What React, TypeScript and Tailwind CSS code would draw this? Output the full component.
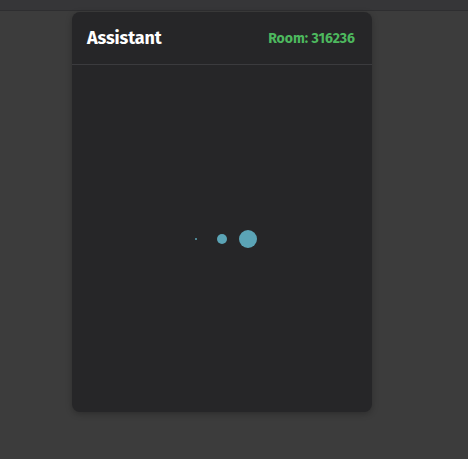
export default function App() {
  return (
    <div className="min-h-screen w-full bg-[#3c3c3c] flex flex-col" style={{ fontFamily: '"Fira Sans", "Open Sans", "Noto Sans", sans-serif' }}>
      <div className="h-[11px] w-full bg-[#363638] border-b border-[#2e2e30]" />
      <div className="flex justify-center pt-px pr-[24px]">
        <div className="w-[300px] h-[400px] bg-[#262628] rounded-lg shadow-[0_2px_6px_rgba(0,0,0,0.25)] flex flex-col">
          <div className="h-[53px] flex items-center justify-between pl-[15px] pr-[17px] pt-[1px] border-b border-[#3b3b3e]">
            <span className="text-white font-bold text-[18px] tracking-[-0.1px]">Assistant</span>
            <span className="text-[#4db85e] font-bold text-[14px]">Room: 316236</span>
          </div>
          <div className="flex-1 flex items-center justify-center">
            <div className="flex items-center">
              <div className="w-[26px] flex justify-center">
                <div className="w-[2px] h-[2px] rounded-full bg-[#5ba4b6]" />
              </div>
              <div className="w-[26px] flex justify-center">
                <div className="w-[10px] h-[10px] rounded-full bg-[#5ba4b6]" />
              </div>
              <div className="w-[26px] flex justify-center">
                <div className="w-[18px] h-[18px] rounded-full bg-[#5ba4b6]" />
              </div>
            </div>
          </div>
        </div>
      </div>
    </div>
  );
}
